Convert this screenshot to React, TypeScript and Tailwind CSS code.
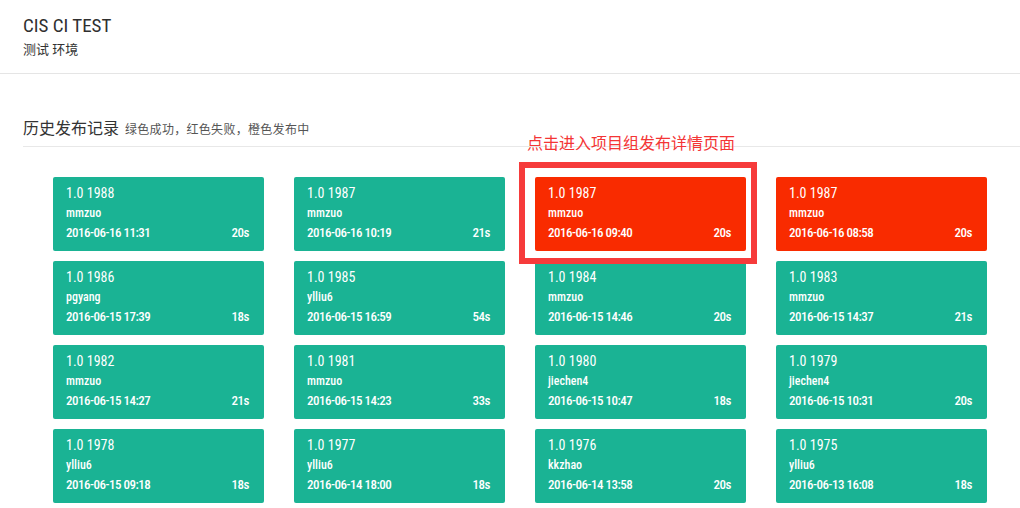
import React from 'react';

type Build = { ver: string; user: string; time: string; dur: string; failed?: boolean };

const builds: Build[] = [
  { ver: '1.0 1988', user: 'mmzuo', time: '2016-06-16 11:31', dur: '20s' },
  { ver: '1.0 1987', user: 'mmzuo', time: '2016-06-16 10:19', dur: '21s' },
  { ver: '1.0 1987', user: 'mmzuo', time: '2016-06-16 09:40', dur: '20s', failed: true },
  { ver: '1.0 1987', user: 'mmzuo', time: '2016-06-16 08:58', dur: '20s', failed: true },
  { ver: '1.0 1986', user: 'pgyang', time: '2016-06-15 17:39', dur: '18s' },
  { ver: '1.0 1985', user: 'ylliu6', time: '2016-06-15 16:59', dur: '54s' },
  { ver: '1.0 1984', user: 'mmzuo', time: '2016-06-15 14:46', dur: '20s' },
  { ver: '1.0 1983', user: 'mmzuo', time: '2016-06-15 14:37', dur: '21s' },
  { ver: '1.0 1982', user: 'mmzuo', time: '2016-06-15 14:27', dur: '21s' },
  { ver: '1.0 1981', user: 'mmzuo', time: '2016-06-15 14:23', dur: '33s' },
  { ver: '1.0 1980', user: 'jiechen4', time: '2016-06-15 10:47', dur: '18s' },
  { ver: '1.0 1979', user: 'jiechen4', time: '2016-06-15 10:31', dur: '20s' },
  { ver: '1.0 1978', user: 'ylliu6', time: '2016-06-15 09:18', dur: '18s' },
  { ver: '1.0 1977', user: 'ylliu6', time: '2016-06-14 18:00', dur: '18s' },
  { ver: '1.0 1976', user: 'kkzhao', time: '2016-06-14 13:58', dur: '20s' },
  { ver: '1.0 1975', user: 'ylliu6', time: '2016-06-13 16:08', dur: '18s' },
];

const font = "font-['Roboto','Noto_Sans_CJK_SC',sans-serif]";

// 单个发布卡片：绿色成功，红色失败
function BuildCard({ b }: { b: Build }) {
  return (
    <div className={`h-[74px] rounded-[2px] pl-[13px] pr-[15px] pt-[7px] text-white ${b.failed ? 'bg-[#f92b00]' : 'bg-[#1ab394]'}`}>
      <div className="text-[14px] leading-[18px] [font-stretch:78%]">{b.ver}</div>
      <div className="mt-[4px] text-[12px] font-medium leading-[14px] [font-stretch:75%]">{b.user}</div>
      <div className="mt-[5px] flex items-center justify-between text-[13px] font-medium leading-[16px] [font-stretch:75%] tracking-[-0.5px]">
        <span>{b.time}</span>
        <span>{b.dur}</span>
      </div>
    </div>
  );
}

export default function App() {
  return (
    <div className={`relative min-h-[508px] bg-white text-[#333] ${font}`}>
      <div className="h-[74px] border-b border-[#e5e5e5] px-[23px] pt-[15px]">
        <div className="text-[19px] leading-[22px] text-[#2f2f2f] [font-stretch:80%]">CIS CI TEST</div>
        <div className="mt-[5px] text-[13px] leading-[16px]">测试 环境</div>
      </div>

      <div className="pl-[23px] pt-[44px]">
        <div className="flex items-end gap-[6px] border-b border-[#e8e8e8] pb-[6px]">
          <span className="text-[16px] leading-[22px] text-[#333]">历史发布记录</span>
          <span className="pb-[2px] text-[12px] leading-[16px] tracking-[0.3px] text-[#555]">绿色成功，红色失败，橙色发布中</span>
        </div>
      </div>

      <div className="ml-[53px] mt-[30px] grid w-[934px] grid-cols-4 gap-x-[30px] gap-y-[10px]">
        {builds.map((b, i) => (
          <BuildCard key={i} b={b} />
        ))}
      </div>

      {/* 标注 */}
      <div className="absolute left-[527px] top-[134px] text-[16px] leading-[20px] text-[#f43535]">点击进入项目组发布详情页面</div>
      <div className="pointer-events-none absolute left-[519px] top-[162px] h-[102px] w-[238px] border-[6px] border-[#f63b3b]" />
    </div>
  );
}
